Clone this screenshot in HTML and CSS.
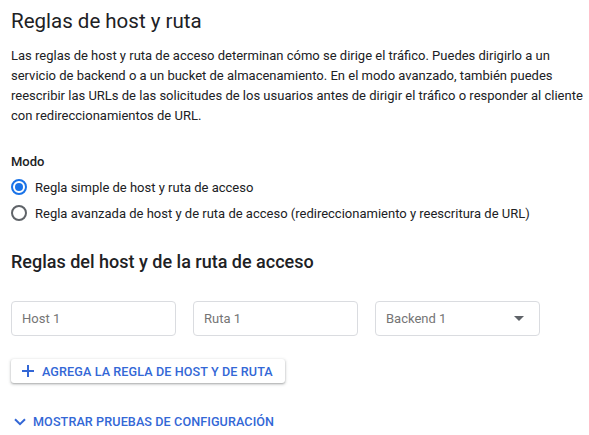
FILE: index.html
```html
<!DOCTYPE html>
<html lang="es">
<head>
<meta charset="utf-8">
<link rel="stylesheet" href="styles.css">
</head>
<body>
<main class="page">
  <h1 class="title">Reglas de host y ruta</h1>
  <p class="desc">Las reglas de host y ruta de acceso determinan cómo se dirige el tráfico. Puedes dirigirlo a un servicio de backend o a un bucket de almacenamiento. En el modo avanzado, también puedes reescribir las URLs de las solicitudes de los usuarios antes de dirigir el tráfico o responder al cliente con redireccionamientos de URL.</p>

  <div class="mode">
    <div class="mode-label">Modo</div>
    <label class="radio-row">
      <span class="radio checked"><span class="dot"></span></span>
      <span>Regla simple de host y ruta de acceso</span>
    </label>
    <label class="radio-row">
      <span class="radio"></span>
      <span>Regla avanzada de host y de ruta de acceso (redireccionamiento y reescritura de URL)</span>
    </label>
  </div>

  <h2 class="subtitle">Reglas del host y de la ruta de acceso</h2>

  <div class="fields">
    <div class="field"><span class="placeholder">Host 1</span></div>
    <div class="field"><span class="placeholder">Ruta 1</span></div>
    <div class="field select"><span class="placeholder">Backend 1</span><span class="caret"></span></div>
  </div>

  <button class="add-btn">
    <svg width="12" height="12" viewBox="0 0 12 12"><path d="M6 0v12M0 6h12" stroke="currentColor" stroke-width="2"/></svg>
    <span>AGREGA LA REGLA DE HOST Y DE RUTA</span>
  </button>

  <div class="toggle">
    <svg width="12" height="8" viewBox="0 0 12 8"><path d="M1 1.2l5 5 5-5" fill="none" stroke="currentColor" stroke-width="2"/></svg>
    <span>MOSTRAR PRUEBAS DE CONFIGURACIÓN</span>
  </div>
</main>
</body>
</html>
```

FILE: styles.css
```css
* { box-sizing: border-box; }
html, body { margin: 0; padding: 0; background: #fff; }
body {
  font-family: Roboto, "Noto Sans", sans-serif;
  color: #202124;
  overflow: hidden;
}
.page {
  padding: 8px 0 0 11px;
  width: 589px;
}
.title {
  margin: 0;
  font-size: 20.5px;
  font-weight: 400;
  line-height: 26px;
  color: #202124;
}
.desc {
  margin: 12px 0 0 0;
  font-size: 13px;
  line-height: 20px;
  width: 576px;
  color: #202124;
}
.mode { margin-top: 26px; }
.mode-label {
  font-size: 13px;
  font-weight: 500;
  line-height: 20px;
  margin-bottom: 2px;
}
.radio-row {
  display: flex;
  align-items: center;
  gap: 8px;
  height: 26px;
  font-size: 13px;
  color: #202124;
}
.radio {
  width: 16px;
  height: 16px;
  border: 2px solid #5f6368;
  border-radius: 50%;
  display: flex;
  align-items: center;
  justify-content: center;
  flex: none;
}
.radio.checked { border-color: #1a73e8; }
.radio .dot {
  width: 8px;
  height: 8px;
  border-radius: 50%;
  background: #1a73e8;
}
.subtitle {
  margin: 24px 0 0 0;
  font-size: 18px;
  font-weight: 500;
  line-height: 24px;
  color: #202124;
}
.fields {
  display: flex;
  gap: 17px;
  margin-top: 27px;
}
.field {
  width: 165px;
  height: 35px;
  border: 1px solid #dadce0;
  border-radius: 4px;
  display: flex;
  align-items: center;
  padding: 0 10px;
}
.placeholder {
  font-size: 13px;
  color: #757575;
}
.select { justify-content: space-between; padding-right: 15px; }
.caret {
  width: 0; height: 0;
  border-left: 5px solid transparent;
  border-right: 5px solid transparent;
  border-top: 5px solid #5f6368;
}
.add-btn {
  margin-top: 23px;
  display: flex;
  align-items: center;
  gap: 8px;
  height: 24px;
  padding: 0 12px 0 11px;
  border: none;
  border-radius: 3px;
  background: #fff;
  box-shadow: 0 1px 2px rgba(60,64,67,0.35), 0 1px 3px 1px rgba(60,64,67,0.12);
  color: #3367d6;
  font-family: Roboto, "Noto Sans", sans-serif;
  font-size: 12.6px;
  font-weight: 500;
  letter-spacing: 0.1px;
}
.toggle {
  margin-top: 31px;
  display: flex;
  align-items: center;
  gap: 7px;
  padding-left: 3px;
  color: #3367d6;
  font-size: 12.6px;
  font-weight: 500;
  letter-spacing: 0.1px;
}
```
